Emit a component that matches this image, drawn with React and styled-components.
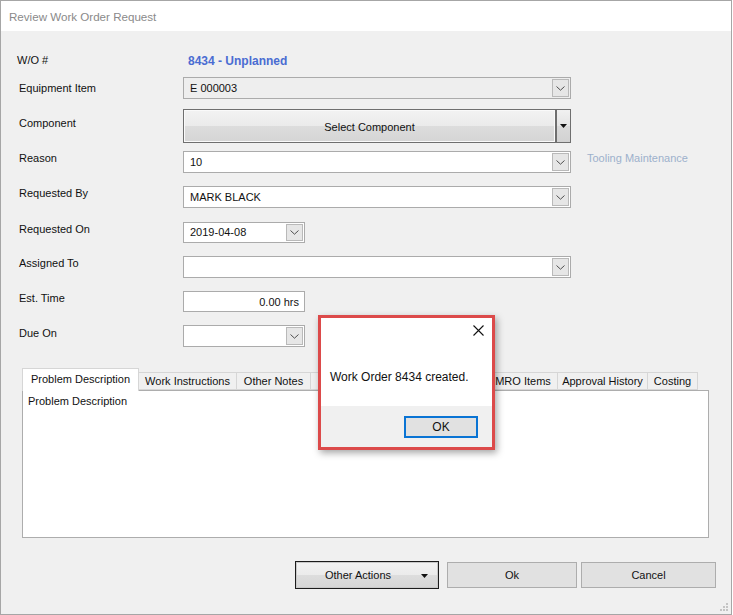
import styled, { createGlobalStyle } from "styled-components";

const GlobalStyle = createGlobalStyle`
  * { box-sizing: border-box; }
  body {
    margin: 0;
    background: #ffffff;
    font-family: "Liberation Sans", Arial, sans-serif;
  }
`;

// the two tabs under the message box are covered, so they carry no label
const tabs = [
  { name: "Problem Description", width: 117, active: true },
  { name: "Work Instructions", width: 99 },
  { name: "Other Notes", width: 75 },
  { name: "", width: 89 },
  { name: "", width: 91 },
  { name: "MRO Items", width: 70 },
  { name: "Approval History", width: 91 },
  { name: "Costing", width: 51 },
];

function Chevron() {
  return (
    <svg width="9" height="5" viewBox="0 0 9 5">
      <polyline points="0.5,0.5 4.5,4.2 8.5,0.5" fill="none" stroke="#505050" strokeWidth="1" />
    </svg>
  );
}

function Caret() {
  return (
    <svg width="7" height="4" viewBox="0 0 7 4">
      <polygon points="0,0 7,0 3.5,4" fill="#111" />
    </svg>
  );
}

function Combo({ value, width, disabled }) {
  return (
    <ComboBox $width={width} $disabled={disabled}>
      <span>{value}</span>
      <DropButton>
        <Chevron />
      </DropButton>
    </ComboBox>
  );
}

function App() {
  return (
    <>
      <GlobalStyle />
      <Window>
        <TitleBar>Review Work Order Request</TitleBar>

        <Form>
          <Row $gap={21} $h={16}>
            <Label $top={2} $indent={0}>W/O #</Label>
            <WoValue>8434 - Unplanned</WoValue>
          </Row>
          <Row $gap={9} $h={22}>
            <Label $top={5}>Equipment Item</Label>
            <Combo value="E 000003" width={388} disabled />
          </Row>
          <Row $gap={10} $h={34}>
            <Label $top={8}>Component</Label>
            <SplitButton>
              <SplitMain>Select Component</SplitMain>
              <SplitArrow>
                <Caret />
              </SplitArrow>
            </SplitButton>
          </Row>
          <Row $gap={8} $h={22}>
            <Label $top={1}>Reason</Label>
            <Combo value="10" width={388} />
            <Hint>Tooling Maintenance</Hint>
          </Row>
          <Row $gap={13} $h={22}>
            <Label $top={1}>Requested By</Label>
            <Combo value="MARK BLACK" width={388} />
          </Row>
          <Row $gap={14} $h={21}>
            <Label $top={1}>Requested On</Label>
            <Combo value="2019-04-08" width={122} />
          </Row>
          <Row $gap={13} $h={22}>
            <Label $top={1}>Assigned To</Label>
            <Combo value="" width={388} />
          </Row>
          <Row $gap={13} $h={21}>
            <Label $top={1}>Est. Time</Label>
            <TextBox>0.00 hrs</TextBox>
          </Row>
          <Row $gap={13} $h={22}>
            <Label $top={2}>Due On</Label>
            <Combo value="" width={122} />
          </Row>
        </Form>

        <TabArea>
          <TabStrip>
            {tabs.map((tab, index) => (
              <Tab key={index} $width={tab.width} $active={tab.active}>
                {tab.name}
              </Tab>
            ))}
          </TabStrip>
          <TabPanel>Problem Description</TabPanel>
        </TabArea>

        <Footer>
          <DefaultButton>
            <span>Other Actions</span>
            <ArrowSlot>
              <Caret />
            </ArrowSlot>
          </DefaultButton>
          <Button $width={130} $ml={8}>Ok</Button>
          <Button $width={135} $ml={4}>Cancel</Button>
        </Footer>

        <Grip>
          <svg width="8" height="8" viewBox="0 0 8 8">
            {[[6, 0], [6, 3], [3, 3], [6, 6], [3, 6], [0, 6]].map(([x, y], i) => (
              <rect key={i} x={x} y={y} width="2" height="2" fill="#c4c4c4" />
            ))}
          </svg>
        </Grip>

        <MessageBox>
          <MessageHeader>
            <svg width="11" height="11" viewBox="0 0 11 11">
              <path d="M0.5 0.5 L10.5 10.5 M10.5 0.5 L0.5 10.5" stroke="#111" strokeWidth="1.1" />
            </svg>
          </MessageHeader>
          <MessageText>Work Order 8434 created.</MessageText>
          <MessageFooter>
            <OkButton>OK</OkButton>
          </MessageFooter>
        </MessageBox>
      </Window>
    </>
  );
}

export default App;

const Window = styled.div`
  position: relative;
  display: flex;
  flex-direction: column;
  width: 732px;
  height: 615px;
  border: 1px solid #a6a6a6;
  background: #f0f0f0;
  font-size: 11px;
  color: #000;
`;

const TitleBar = styled.div`
  display: flex;
  align-items: center;
  height: 30px;
  padding-left: 8px;
  padding-top: 1px;
  background: #ffffff;
  color: #8a8a8a;
  font-size: 11.6px;
`;

const Form = styled.div`
  display: flex;
  flex-direction: column;
  padding-left: 16px;
`;

const Row = styled.div`
  display: flex;
  align-items: flex-start;
  margin-top: ${(p) => p.$gap}px;
  height: ${(p) => p.$h}px;
`;

const Label = styled.div`
  width: 166px;
  flex-shrink: 0;
  padding-top: ${(p) => p.$top}px;
  padding-left: ${(p) => (p.$indent === undefined ? 2 : p.$indent)}px;
  line-height: 13px;
  color: #111;
`;

const WoValue = styled.div`
  padding-left: 5px;
  padding-top: 1px;
  line-height: 16px;
  font-size: 12px;
  font-weight: 700;
  color: #4a6cd2;
`;

const ComboBox = styled.div`
  display: flex;
  align-items: center;
  justify-content: space-between;
  width: ${(p) => p.$width}px;
  height: 100%;
  border: 1px solid #ababab;
  background: ${(p) => (p.$disabled ? "#eeeeee" : "#ffffff")};
  padding-left: 6px;

  span {
    line-height: 13px;
    color: #111;
  }
`;

const DropButton = styled.div`
  display: flex;
  align-items: center;
  justify-content: center;
  width: 17px;
  height: calc(100% - 2px);
  margin-right: 1px;
  border: 1px solid #b9b9b9;
  background: #e6e6e6;
`;

const SplitButton = styled.div`
  display: flex;
  width: 388px;
  height: 100%;
`;

const SplitMain = styled.div`
  flex: 1;
  display: flex;
  align-items: center;
  justify-content: center;
  padding-top: 2px;
  border: 1px solid #6f6f6f;
  border-right-width: 2px;
  box-shadow: inset 0 0 0 1px #fafafa;
  background: linear-gradient(#f3f3f3 0%, #ebebeb 50%, #dddddd 50%, #d5d5d5 100%);
  color: #111;
`;

const SplitArrow = styled.div`
  display: flex;
  align-items: center;
  justify-content: center;
  width: 14px;
  border: 1px solid #6f6f6f;
  border-left: none;
  background: linear-gradient(#f1f1f1 0%, #e4e4e4 50%, #dadada 50%, #d2d2d2 100%);
`;

const Hint = styled.div`
  margin-left: 16px;
  padding-top: 1px;
  line-height: 13px;
  color: #9db0cc;
`;

const TextBox = styled.div`
  display: flex;
  align-items: center;
  justify-content: flex-end;
  width: 122px;
  height: 100%;
  padding-right: 5px;
  border: 1px solid #ababab;
  background: #ffffff;
  color: #111;
`;

const TabArea = styled.div`
  display: flex;
  flex-direction: column;
  width: 687px;
  margin-top: 21px;
  margin-left: 21px;
`;

const TabStrip = styled.div`
  display: flex;
  align-items: flex-end;
  height: 22px;
`;

const Tab = styled.div`
  position: relative;
  display: flex;
  align-items: center;
  justify-content: center;
  width: ${(p) => p.$width}px;
  height: ${(p) => (p.$active ? 23 : 18)}px;
  margin-bottom: ${(p) => (p.$active ? -1 : 0)}px;
  margin-left: -1px;
  padding-bottom: ${(p) => (p.$active ? 3 : 0)}px;
  border: 1px solid #d6d6d6;
  border-bottom: ${(p) => (p.$active ? "none" : "1px solid #d6d6d6")};
  background: ${(p) => (p.$active ? "#ffffff" : "#f0f0f0")};
  z-index: ${(p) => (p.$active ? 2 : 1)};
  white-space: nowrap;
  color: #111;

  &:first-child {
    margin-left: 0;
  }
`;

const TabPanel = styled.div`
  height: 148px;
  padding: 4px 5px;
  border: 1px solid #adadad;
  background: #ffffff;
  line-height: 13px;
  color: #111;
`;

const Footer = styled.div`
  display: flex;
  align-items: center;
  justify-content: flex-end;
  margin-top: 23px;
  padding-right: 15px;
`;

const DefaultButton = styled.div`
  display: flex;
  align-items: center;
  width: 144px;
  height: 28px;
  border: 1px solid #1c1c1c;
  box-shadow: inset 0 0 0 1px #c9c9c9;
  background: linear-gradient(#f3f3f3 0%, #ebebeb 50%, #dddddd 50%, #d6d6d6 100%);
  color: #111;

  span {
    flex: 1;
    text-align: center;
    padding-left: 10px;
  }
`;

const ArrowSlot = styled.div`
  display: flex;
  align-items: center;
  justify-content: center;
  width: 28px;
  padding-top: 1px;
`;

const Button = styled.div`
  display: flex;
  align-items: center;
  justify-content: center;
  width: ${(p) => p.$width}px;
  height: 26px;
  margin-left: ${(p) => p.$ml}px;
  border: 1px solid #adadad;
  background: #e1e1e1;
  color: #111;
`;

const Grip = styled.div`
  position: absolute;
  right: 3px;
  bottom: 3px;
  display: flex;
`;

const MessageBox = styled.div`
  position: absolute;
  left: 317px;
  top: 314px;
  z-index: 10;
  display: flex;
  flex-direction: column;
  width: 177px;
  height: 135px;
  border: 3px solid #dc4a4a;
  background: #f0f0f0;
  box-shadow: 2px 3px 7px rgba(0, 0, 0, 0.35);
  font-size: 12px;
`;

const MessageHeader = styled.div`
  display: flex;
  align-items: center;
  justify-content: flex-end;
  height: 25px;
  padding-right: 8px;
  background: #ffffff;
`;

const MessageText = styled.div`
  height: 63px;
  padding-left: 9px;
  padding-top: 27px;
  background: #ffffff;
  line-height: 15px;
  color: #111;
`;

const MessageFooter = styled.div`
  display: flex;
  justify-content: flex-end;
  padding-top: 10px;
  padding-right: 14px;
`;

const OkButton = styled.div`
  display: flex;
  align-items: center;
  justify-content: center;
  width: 74px;
  height: 22px;
  border: 2px solid #0a74d4;
  background: #e1e1e1;
  color: #111;
`;
